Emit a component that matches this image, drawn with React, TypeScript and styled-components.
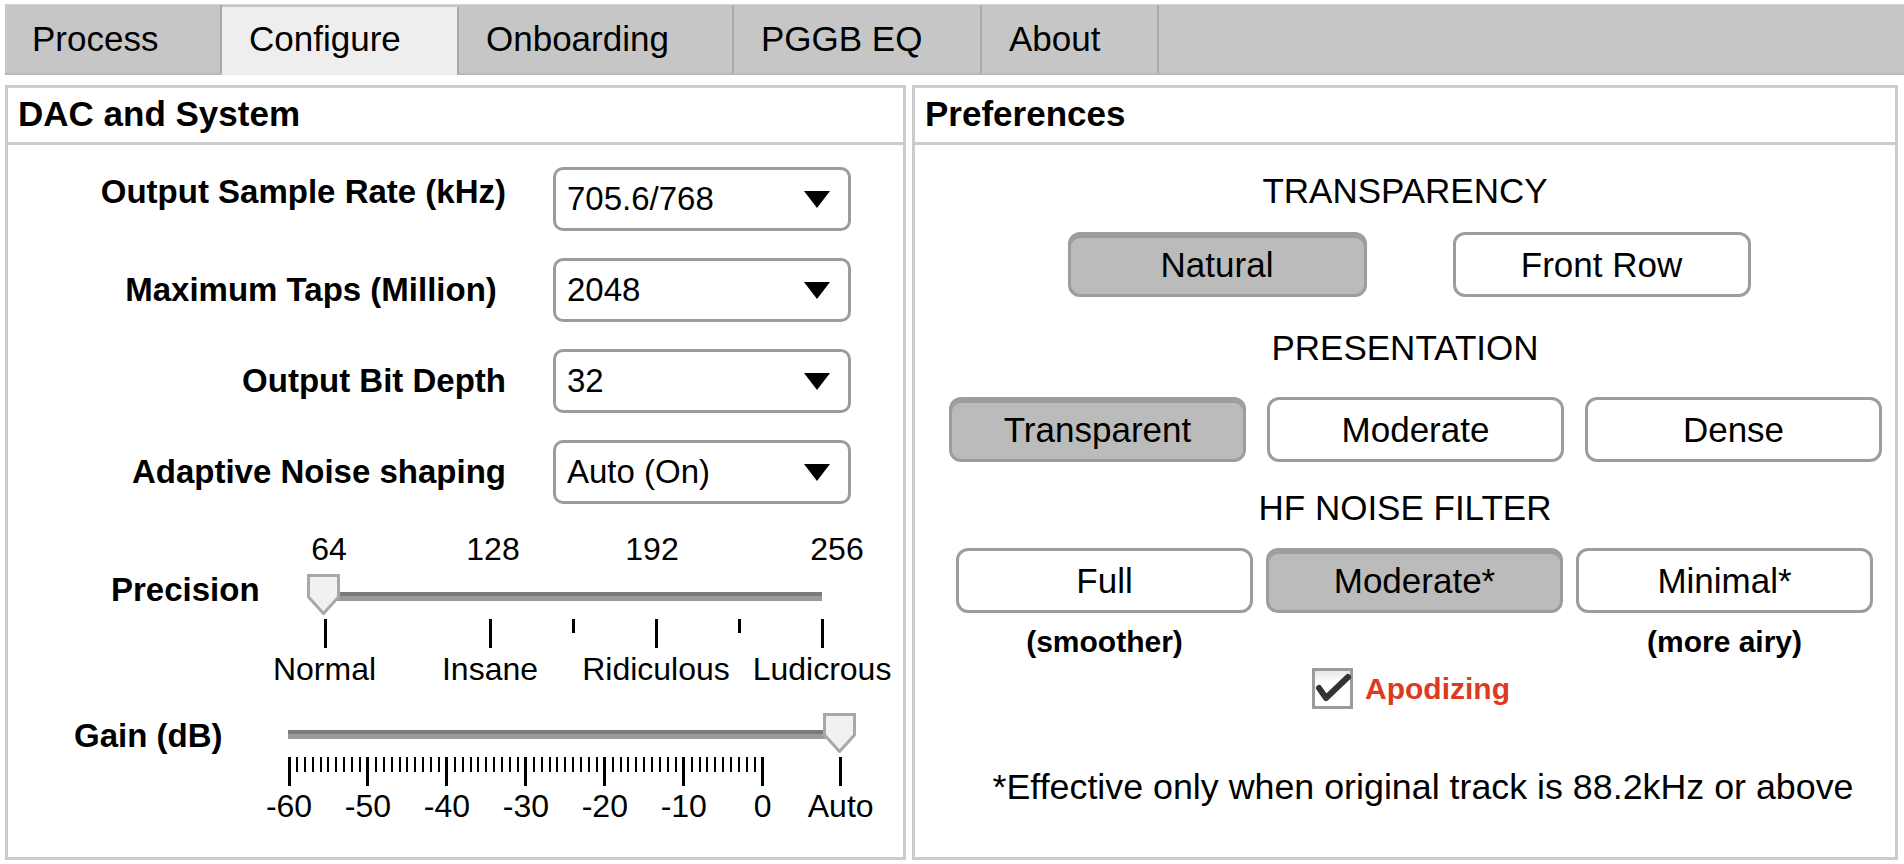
import React from 'react';
import styled, { createGlobalStyle } from 'styled-components';

const GlobalStyle = createGlobalStyle`
  html, body { margin: 0; padding: 0; background: #fff; }
  body { font-family: "Liberation Sans", Arial, Helvetica, sans-serif; color: #000; }
  * { box-sizing: border-box; }
`;

const Page = styled.div`
  width: 1904px;
  height: 864px;
  overflow: hidden;
  padding-top: 4px;
`;

const TabBar = styled.nav`
  margin-left: 5px;
  height: 71px;
  display: flex;
  align-items: stretch;
  background: #c6c6c7;
  border-top: 1px solid #d2d2d2;
  border-bottom: 2px solid #b8b8b8;
`;

const Tab = styled.div<{ $active?: boolean; $w: number }>`
  display: flex;
  align-items: center;
  flex: none;
  width: ${(p) => p.$w}px;
  padding: 0 0 ${(p) => (p.$active ? '5px' : '1px')} 27px;
  font-size: 35px;
  border-right: 2px solid #a9a9a9;
  background: ${(p) => (p.$active ? '#eeeeee' : 'transparent')};
  margin: ${(p) => (p.$active ? '2px 0 -2px' : '0')};
`;

const Panels = styled.div`
  display: flex;
  gap: 6px;
  margin: 10px 0 0 5px;
`;

const Panel = styled.section<{ $width: number }>`
  width: ${(p) => p.$width}px;
  height: 775px;
  border: 3px solid #cccccc;
  display: flex;
  flex-direction: column;
`;

const PanelHeader = styled.h2`
  margin: 0;
  height: 57px;
  line-height: 52px;
  border-bottom: 3px solid #cccccc;
  font-size: 35px;
  font-weight: bold;
  padding-left: 10px;
`;

const Form = styled.div`
  display: grid;
  grid-template-columns: 498px 298px;
  column-gap: 47px;
  row-gap: 27px;
  margin-top: 22px;
  align-items: center;
`;

const FieldLabel = styled.label<{ $lift?: number }>`
  text-align: right;
  font-weight: bold;
  font-size: 33px;
  margin-bottom: ${(p) => (p.$lift ? p.$lift * 2 : 0)}px;
`;

const Select = styled.div`
  height: 64px;
  border: 3px solid #9c9c9c;
  border-radius: 10px;
  display: flex;
  align-items: center;
  justify-content: space-between;
  padding: 0 18px 0 11px;
  font-size: 33px;
  background: #fff;
`;

const SliderRow = styled.div<{ $mt: number }>`
  display: flex;
  margin-top: ${(p) => p.$mt}px;
`;

const SliderLabel = styled.div<{ $indent: number; $top: number }>`
  width: 232px;
  flex: none;
  padding-left: ${(p) => p.$indent}px;
  padding-top: ${(p) => p.$top}px;
  font-size: 33px;
  line-height: 33px;
  font-weight: bold;
`;

const SliderBox = styled.div<{ $h: number }>`
  position: relative;
  width: 660px;
  height: ${(p) => p.$h}px;
`;

const Track = styled.div<{ $x: number; $y: number; $w: number }>`
  position: absolute;
  left: ${(p) => p.$x}px;
  top: ${(p) => p.$y}px;
  width: ${(p) => p.$w}px;
  height: 9px;
  background: linear-gradient(#7a7a7a 0 45%, #9b9b9b 45% 100%);
`;

const ThumbWrap = styled.div<{ $x: number; $y: number }>`
  position: absolute;
  left: ${(p) => p.$x}px;
  top: ${(p) => p.$y}px;
  width: 33px;
  height: 41px;
`;

const Ticks = styled.svg`
  position: absolute;
  left: 0;
  top: 0;
  overflow: visible;
  shape-rendering: crispEdges;
`;

const ScaleText = styled.span<{ $y: number }>`
  position: absolute;
  top: ${(p) => p.$y}px;
  transform: translateX(-50%);
  font-size: 32px;
  line-height: 32px;
  white-space: nowrap;
`;

const PrefBody = styled.div`
  display: flex;
  flex-direction: column;
  align-items: stretch;
`;

const Heading = styled.div<{ $mt: number }>`
  margin-top: ${(p) => p.$mt}px;
  text-align: center;
  font-size: 35px;
  line-height: 40px;
`;

const ButtonRow = styled.div<{ $mt: number; $gap: number; $shift: number }>`
  display: flex;
  justify-content: center;
  gap: ${(p) => p.$gap}px;
  margin-top: ${(p) => p.$mt}px;
  padding-left: ${(p) => p.$shift}px;
`;

const Choice = styled.div<{ $on?: boolean; $w?: number }>`
  width: ${(p) => p.$w ?? 297}px;
  height: 65px;
  border: 3px solid #9d9d9d;
  border-radius: 12px;
  display: flex;
  align-items: center;
  justify-content: center;
  font-size: 35px;
  background: ${(p) => (p.$on ? '#bbbbbb' : '#ffffff')};
  box-shadow: ${(p) => (p.$on ? 'inset 0 3px 0 #9d9d9d' : 'none')};
`;

const Note = styled.div`
  width: 297px;
  text-align: center;
  font-size: 30px;
  line-height: 34px;
  font-weight: bold;
`;

const CheckRow = styled.div`
  display: flex;
  justify-content: center;
  align-items: center;
  gap: 12px;
  margin-top: 9px;
  padding-left: 12px;
`;

const CheckBox = styled.span`
  width: 41px;
  height: 41px;
  display: block;
`;

const CheckText = styled.span`
  font-size: 30px;
  font-weight: bold;
  color: #dd3b1f;
`;

const Footnote = styled.div`
  margin-top: 58px;
  text-align: center;
  font-size: 35.8px;
  line-height: 40px;
  padding-left: 36px;
`;

const Arrow = () => (
  <svg width="26" height="17" viewBox="0 0 26 17">
    <polygon points="0,0 26,0 13,17" fill="#000" />
  </svg>
);

const Thumb = ({ h }: { h: number }) => (
  <svg width="33" height={h} viewBox={`0 0 33 ${h}`}>
    <polygon
      points={`1.5,1.5 31.5,1.5 31.5,${h - 18} 16.5,${h - 1.5} 1.5,${h - 18}`}
      fill="#f1f1f1"
      stroke="#a8a8a8"
      strokeWidth="3"
      strokeLinejoin="miter"
    />
  </svg>
);

const tabs = [
  { t: 'Process', w: 217 },
  { t: 'Configure', w: 237, active: true },
  { t: 'Onboarding', w: 275 },
  { t: 'PGGB EQ', w: 248 },
  { t: 'About', w: 177 },
];

const fields = [
  { label: 'Output Sample Rate (kHz)', value: '705.6/768', lift: 7 },
  { label: 'Maximum Taps (Million)\u00a0', value: '2048' },
  { label: 'Output Bit Depth', value: '32' },
  { label: 'Adaptive Noise shaping', value: 'Auto (On)' },
];

// 3px-wide lines centred on x.5, 2px-wide lines on whole pixels
const crisp3 = (x: number) => Math.round(x - 0.5) + 0.5;
const crisp2 = (x: number) => Math.round(x);

const precX = (v: number) => 85 + ((v - 64) / 64) * 165.9;
const precTop = [
  { t: '64', x: 89 },
  { t: '128', x: 253 },
  { t: '192', x: 412 },
  { t: '256', x: 597 },
];
const precBottom = [
  { t: 'Normal', x: 84.5 },
  { t: 'Insane', x: 250 },
  { t: 'Ridiculous', x: 416 },
  { t: 'Ludicrous', x: 582 },
];
const precTicks = [
  { v: 64, long: true },
  { v: 128, long: true },
  { v: 160, long: false },
  { v: 192, long: true },
  { v: 224, long: false },
  { v: 256, long: true },
];

const gainX = (db: number) => 49 + (db + 60) * 7.895;
const gainDb = Array.from({ length: 61 }, (_, i) => i - 60);
const gainLabels = [-60, -50, -40, -30, -20, -10, 0];
const autoX = 600.7;

export default function App() {
  return (
    <Page>
      <GlobalStyle />
      <TabBar>
        {tabs.map((t) => (
          <Tab key={t.t} $w={t.w} $active={t.active}>
            {t.t}
          </Tab>
        ))}
      </TabBar>
      <Panels>
        <Panel $width={901}>
          <PanelHeader>DAC and System</PanelHeader>
          <Form>
            {fields.map((f) => (
              <React.Fragment key={f.label}>
                <FieldLabel $lift={f.lift}>{f.label}</FieldLabel>
                <Select>
                  <span>{f.value}</span>
                  <Arrow />
                </Select>
              </React.Fragment>
            ))}
          </Form>

          <SliderRow $mt={26}>
            <SliderLabel $indent={103} $top={43}>Precision</SliderLabel>
            <SliderBox $h={160}>
              {precTop.map((l) => (
                <ScaleText key={l.t} $y={3} style={{ left: l.x }}>{l.t}</ScaleText>
              ))}
              <Track $x={81} $y={62} $w={501} />
              <Ticks width="660" height="160">
                {precTicks.map((t) => (
                  <line
                    key={t.v}
                    x1={crisp3(precX(t.v))}
                    x2={crisp3(precX(t.v))}
                    y1={89}
                    y2={t.long ? 118 : 103}
                    stroke="#000"
                    strokeWidth="3"
                  />
                ))}
              </Ticks>
              <ThumbWrap $x={67} $y={44}>
                <Thumb h={41} />
              </ThumbWrap>
              {precBottom.map((l) => (
                <ScaleText key={l.t} $y={123} style={{ left: l.x }}>{l.t}</ScaleText>
              ))}
            </SliderBox>
          </SliderRow>

          <SliderRow $mt={10}>
            <SliderLabel $indent={66} $top={19}>Gain (dB)</SliderLabel>
            <SliderBox $h={130}>
              <Track $x={48} $y={30} $w={539} />
              <Ticks width="660" height="130">
                {gainDb.map((db) => {
                  const major = db % 10 === 0;
                  const x = major ? crisp3(gainX(db)) : crisp2(gainX(db));
                  return (
                    <line
                      key={db}
                      x1={x}
                      x2={x}
                      y1={57}
                      y2={major ? 86 : 72}
                      stroke="#000"
                      strokeWidth={major ? 3 : 2}
                    />
                  );
                })}
                <line x1={crisp3(autoX)} x2={crisp3(autoX)} y1={57} y2={86} stroke="#000" strokeWidth="3" />
              </Ticks>
              <ThumbWrap $x={583} $y={13}>
                <Thumb h={40} />
              </ThumbWrap>
              {gainLabels.map((db) => (
                <ScaleText key={db} $y={90} style={{ left: gainX(db) }}>{db}</ScaleText>
              ))}
              <ScaleText $y={90} style={{ left: autoX }}>Auto</ScaleText>
            </SliderBox>
          </SliderRow>
        </Panel>

        <Panel $width={986}>
          <PanelHeader>Preferences</PanelHeader>
          <PrefBody>
            <Heading $mt={26}>TRANSPARENCY</Heading>
            <ButtonRow $mt={21} $gap={86} $shift={8}>
              <Choice $on $w={299}>Natural</Choice>
              <Choice $w={298}>Front Row</Choice>
            </ButtonRow>

            <Heading $mt={31}>PRESENTATION</Heading>
            <ButtonRow $mt={29} $gap={21} $shift={21}>
              <Choice $on>Transparent</Choice>
              <Choice>Moderate</Choice>
              <Choice>Dense</Choice>
            </ButtonRow>

            <Heading $mt={26}>HF NOISE FILTER</Heading>
            <ButtonRow $mt={20} $gap={13} $shift={19}>
              <Choice>Full</Choice>
              <Choice $on>Moderate*</Choice>
              <Choice>Minimal*</Choice>
            </ButtonRow>
            <ButtonRow $mt={12} $gap={13} $shift={19}>
              <Note>(smoother)</Note>
              <Note />
              <Note>(more airy)</Note>
            </ButtonRow>

            <CheckRow>
              <CheckBox>
                <svg width="41" height="41" viewBox="0 0 41 41">
                  <defs>
                    <linearGradient id="cbg" x1="0" y1="0" x2="0" y2="1">
                      <stop offset="0" stopColor="#e4e4e4" />
                      <stop offset="0.35" stopColor="#ffffff" />
                    </linearGradient>
                  </defs>
                  <rect x="1.5" y="1.5" width="38" height="38" fill="url(#cbg)" stroke="#9b9b9b" strokeWidth="3" />
                  <polyline
                    points="7,20 14,30 36,9"
                    fill="none"
                    stroke="#333"
                    strokeWidth="6"
                    strokeLinecap="round"
                    strokeLinejoin="round"
                  />
                </svg>
              </CheckBox>
              <CheckText>Apodizing</CheckText>
            </CheckRow>

            <Footnote>*Effective only when original track is 88.2kHz or above</Footnote>
          </PrefBody>
        </Panel>
      </Panels>
    </Page>
  );
}
